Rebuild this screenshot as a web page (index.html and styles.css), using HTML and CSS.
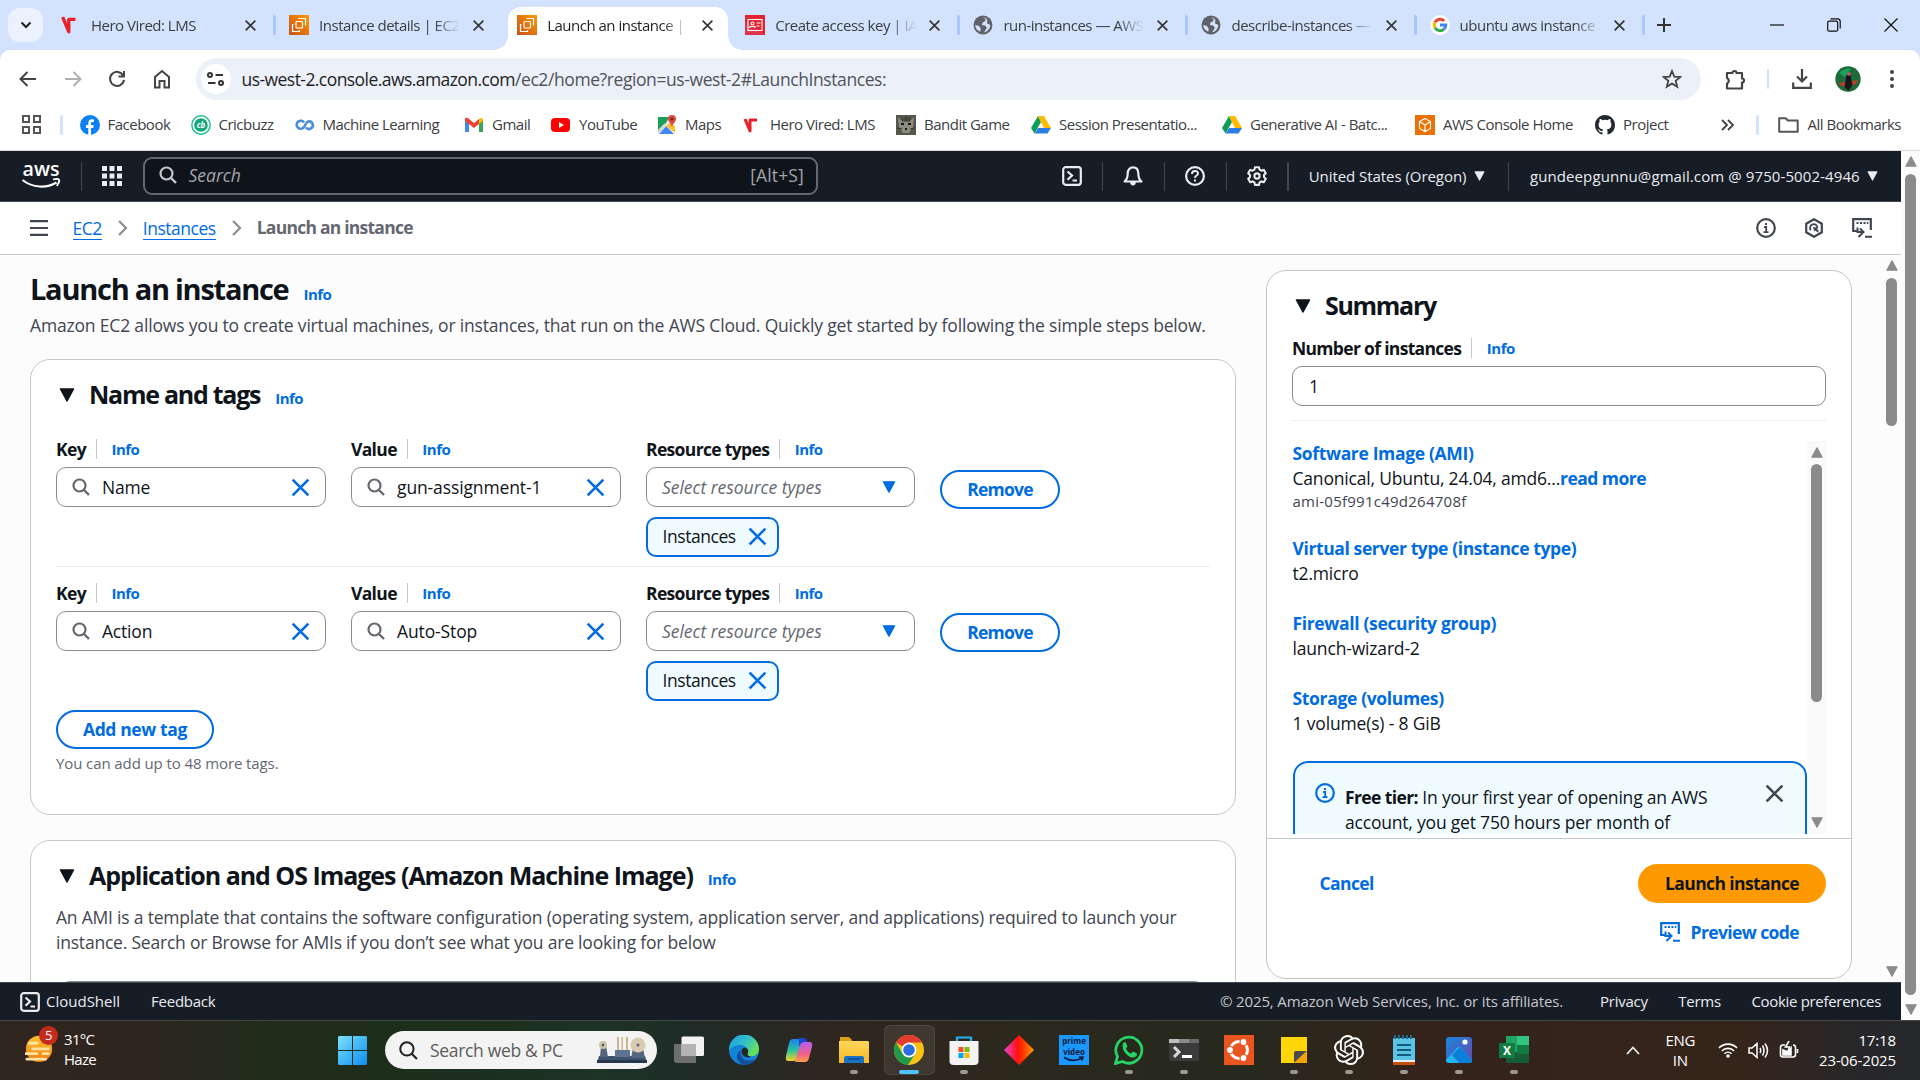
FILE: index.html
```html
<!DOCTYPE html>
<html lang="en">
<head>
<meta charset="utf-8">
<title>Launch an instance | EC2</title>
<link rel="stylesheet" href="styles.css">
</head>
<body>
<svg class="defs" aria-hidden="true">
  <defs>
    <linearGradient id="g-aws" x1="0" y1="1" x2="1" y2="0"><stop offset="0" stop-color="#c8511b"/><stop offset="1" stop-color="#ff9900"/></linearGradient>
    <linearGradient id="g-win" x1="0" y1="0" x2="1" y2="1"><stop offset="0" stop-color="#7ce0fd"/><stop offset="1" stop-color="#0a8fee"/></linearGradient>
    <linearGradient id="g-edge" x1="0" y1="0" x2="1" y2=".5"><stop offset="0" stop-color="#1c9ce0"/><stop offset=".6" stop-color="#35c1c8"/><stop offset="1" stop-color="#66e05a"/></linearGradient>
    <linearGradient id="g-cop" x1="0" y1="0" x2="0" y2="1"><stop offset="0" stop-color="#1b7ff0"/><stop offset=".5" stop-color="#27c2a0"/><stop offset="1" stop-color="#f4d02a"/></linearGradient>
    <linearGradient id="g-cop2" x1="0" y1="0" x2="0" y2="1"><stop offset="0" stop-color="#b45cf0"/><stop offset=".6" stop-color="#f2608a"/><stop offset="1" stop-color="#ffa04a"/></linearGradient>
    <linearGradient id="g-dia" x1="0" x2="1"><stop offset="0" stop-color="#e548d8"/><stop offset=".45" stop-color="#ff1010"/><stop offset=".6" stop-color="#ff2a00"/><stop offset="1" stop-color="#ffa000"/></linearGradient>
    <linearGradient id="g-fold" x1="0" y1="0" x2="0" y2="1"><stop offset="0" stop-color="#ffd75a"/><stop offset="1" stop-color="#f7b928"/></linearGradient>
    <linearGradient id="g-pho" x1="0" y1="0" x2="1" y2="1"><stop offset="0" stop-color="#1a84dc"/><stop offset="1" stop-color="#6a4bb0"/></linearGradient>
    <linearGradient id="g-sun" x1="0" y1="0" x2="0" y2="1"><stop offset="0" stop-color="#ffc52e"/><stop offset="1" stop-color="#f07a13"/></linearGradient>
  </defs>
  <symbol id="close" viewBox="0 0 16 16"><path d="M2 2l12 12M14 2L2 14" fill="none" stroke="currentColor" stroke-width="2"/></symbol>
  <symbol id="search" viewBox="0 0 18 18"><circle cx="7.5" cy="7.5" r="6" fill="none" stroke="currentColor" stroke-width="2.2"/><path d="M12 12l5 5" stroke="currentColor" stroke-width="2.4"/></symbol>
  <symbol id="down" viewBox="0 0 16 14"><path d="M1.5 1h13L8 13z" fill="currentColor" stroke="currentColor" stroke-width="1.5" stroke-linejoin="round"/></symbol>
  <symbol id="vired" viewBox="0 0 18 18"><path d="M1.500 2L7 15V4h6" fill="none" stroke="#e8202c" stroke-width="3" stroke-linejoin="round"/></symbol>
  <symbol id="ec2" viewBox="0 0 20 20"><path fill="url(#g-aws)" d="M0 0h20v20H0z"/><g fill="none" stroke="#fff" stroke-width="1.2"><rect x="7" y="6.500" width="6.500" height="6.500" rx="1"/><path d="M10 4V3.500h6.500V10H16M4.500 9.500H3.500V16.500H10.500V15"/></g></symbol>
  <symbol id="iam" viewBox="0 0 20 20"><path fill="#dd344c" d="M0 0h20v20H0z"/><path fill="#e2222c" d="M0 0h20v20L0 6z"/><g fill="none" stroke="#fff" stroke-width="1.1"><rect x="3" y="4.500" width="14" height="11"/><circle cx="7.500" cy="8.500" r="1.500"/><path d="M5 13v-1.500h5V13M11.500 8h4M11.500 11h3"/></g></symbol>
  <symbol id="globe" viewBox="0 0 18 18"><circle cx="9" cy="9" r="8.500" fill="#5f6368"/><path d="M9 2c2 1 3 2 2 3.500L8.500 7 8 9l3 .5 1.500 2-2.500 4c3-.5 5.500-3 5.500-6.500l-3-1.500.5-3C12 3 10.500 2 9 2zM2 9l3.500 1 1.500 2.500L6.500 15C4 14 2 12 2 9z" fill="#d3e2fd"/></symbol>
  <symbol id="google" viewBox="0 0 20 20"><circle cx="10" cy="10" r="10" fill="#fff"/><g fill="none" stroke-width="3"><path d="M14.200 6A5.800 5.800 0 0 0 5 7.200" stroke="#ea4335"/><path d="M5 7.200a5.800 5.800 0 0 0 0 5.600" stroke="#fbbc05"/><path d="M5 12.800a5.800 5.800 0 0 0 9 1.300" stroke="#34a853"/><path d="M10 10h5.800a5.800 5.800 0 0 1-1.800 4.100" stroke="#4285f4"/></g></symbol>
  <symbol id="drive" viewBox="0 0 20 18"><path fill="#0f9d58" d="M7 0L0 12l3.500 5.500L10 6z"/><path fill="#ffba00" d="M7 0h6l7 12h-7z"/><path fill="#2f7de1" d="M3.500 17.500L7 12h13l-3.500 5.500z"/></symbol>
  <symbol id="shell" viewBox="0 0 20 20"><rect x="1.200" y="1.200" width="17.600" height="17.600" rx="2.500" fill="none" stroke="currentColor" stroke-width="2.200"/><path d="M5.500 5.500l4.500 4-4.500 4.200M10.500 14.500H15" fill="none" stroke="currentColor" stroke-width="2.200"/></symbol>
  <symbol id="info" viewBox="0 0 20 20"><circle cx="10" cy="10" r="8.800" fill="none" stroke="currentColor" stroke-width="2.200"/><path d="M8 9h2.200v5M7.500 14.200h5M9 6h2" fill="none" stroke="currentColor" stroke-width="1.800"/></symbol>
  <symbol id="code" viewBox="0 0 20 20"><path d="M5.500 13H1.200V1.200h17.600V12" fill="none" stroke="currentColor" stroke-width="2.200"/><path d="M4.500 5h2M8 5h2M11.500 5h2M14.800 5h1.500M13 18.800h7M5.500 9.500v4.500h5.500M8 10.500l3.500 3.500-5 5" fill="none" stroke="currentColor" stroke-width="2"/></symbol>
</svg>

<div class="tabs">
  <div class="tab-menu"><svg width="12" height="8" viewBox="0 0 12 8"><path d="M1.500 1.500L6 6l4.500-4.500" fill="none" stroke="#1f1f1f" stroke-width="2"/></svg></div>
  <div class="tab"><svg class="fav"><use href="#vired"/></svg><span class="tt">Hero Vired: LMS</span><svg class="tx"><use href="#close"/></svg></div>
  <div class="tab before"><svg class="fav"><use href="#ec2"/></svg><span class="tt">Instance details | EC2 |</span><svg class="tx"><use href="#close"/></svg></div>
  <div class="tab on"><svg class="fav"><use href="#ec2"/></svg><span class="tt">Launch an instance | EC2</span><svg class="tx"><use href="#close"/></svg></div>
  <div class="tab"><svg class="fav"><use href="#iam"/></svg><span class="tt">Create access key | IAM</span><svg class="tx"><use href="#close"/></svg></div>
  <div class="tab"><svg class="fav"><use href="#globe"/></svg><span class="tt">run-instances — AWS C</span><svg class="tx"><use href="#close"/></svg></div>
  <div class="tab"><svg class="fav"><use href="#globe"/></svg><span class="tt">describe-instances — A</span><svg class="tx"><use href="#close"/></svg></div>
  <div class="tab"><svg class="fav"><use href="#google"/></svg><span class="tt">ubuntu aws instance a</span><svg class="tx"><use href="#close"/></svg></div>
  <svg class="plus" width="14" height="14" viewBox="0 0 14 14"><path d="M7 0v14M0 7h14" stroke="#333" stroke-width="2"/></svg>
  <div class="winbtns">
    <svg width="14" height="14" viewBox="0 0 14 14"><path d="M0 7h14" stroke="#111" stroke-width="1.200"/></svg>
    <svg width="14" height="14" viewBox="0 0 14 14" fill="none" stroke="#111" stroke-width="1.200"><rect x=".7" y="3.200" width="10" height="10" rx="1.500"/><path d="M3.500.8h7a2.700 2.700 0 0 1 2.700 2.700v7"/></svg>
    <svg width="14" height="14" viewBox="0 0 14 14"><path d="M.5.5l13 13M13.500.5l-13 13" stroke="#111" stroke-width="1.200"/></svg>
  </div>
</div>

<div class="strip"><div class="toolbar">
  <div class="nav">
    <svg width="18" height="16" viewBox="0 0 18 16"><path d="M8.500 1L1.500 8l7 7M1.500 8H17" fill="none" stroke="#444" stroke-width="2"/></svg>
    <svg width="18" height="16" viewBox="0 0 18 16"><path d="M9.500 1l7 7-7 7M16.500 8H1" fill="none" stroke="#b0b0b0" stroke-width="2"/></svg>
    <svg width="18" height="18" viewBox="0 0 18 18"><path d="M15.200 5.500A7 7 0 1 0 16 9.800M16 1v5.500h-5.500" fill="none" stroke="#444" stroke-width="2"/></svg>
    <svg width="18" height="20" viewBox="0 0 18 20"><path d="M2 18.500V8l7-6 7 6v10.500h-4.500V12h-5v6.500z" fill="none" stroke="#444" stroke-width="2"/></svg>
  </div>
  <div class="omni">
    <div class="site"><svg width="17" height="14" viewBox="0 0 17 14"><g fill="none" stroke="#333" stroke-width="2"><circle cx="3" cy="3" r="2"/><path d="M8.500 3H16M1 11h7.500"/><circle cx="14" cy="11" r="2"/></g></svg></div>
    <div class="url"><span class="host">us-west-2.console.aws.amazon.com</span><span class="path">/ec2/home?region=us-west-2#LaunchInstances:</span></div>
    <svg class="star" width="20" height="20" viewBox="0 0 20 20"><path d="M10 2l2.300 5.600 6 .4-4.600 3.900 1.500 5.900L10 14.500l-5.200 3.300 1.500-5.900L1.700 8l6-.4z" fill="none" stroke="#444" stroke-width="1.800"/></svg>
  </div>
  <div class="tools">
    <svg width="21" height="21" viewBox="0 0 21 21"><path d="M2 4h5.500a2 2 0 0 1 4 0H17v5.500a2 2 0 0 1 0 4V19.500H2V14.500a3 3 0 0 0 0-5.500z" fill="none" stroke="#444" stroke-width="2.200" stroke-linejoin="round"/></svg>
    <i class="bar"></i>
    <svg width="20" height="20" viewBox="0 0 20 20"><path d="M10 0v12M5 7.500l5 5 5-5M1.200 13.500v5.300h17.600v-5.300" fill="none" stroke="#444" stroke-width="2.200"/></svg>
    <svg width="26" height="26" viewBox="0 0 26 26"><circle cx="13" cy="13" r="12.700" fill="#1d6b38"/><path d="M3 17l20-3a12 12 0 0 1-20 3" fill="#b8412c"/><path d="M4 7q6-6 12-4l-6 8z" fill="#19a05c"/><path d="M11.500 9h4l2 10-4 6-4-4z" fill="#14171f"/><circle cx="14" cy="8" r="1.800" fill="#d94a6b"/></svg>
    <svg width="4" height="18" viewBox="0 0 4 18" fill="#444"><circle cx="2" cy="2" r="2"/><circle cx="2" cy="9" r="2"/><circle cx="2" cy="16" r="2"/></svg>
  </div>
</div></div>

<div class="marks">
  <svg class="apps" width="19" height="19" viewBox="0 0 19 19" fill="none" stroke="#555" stroke-width="2"><path d="M1 1h6v6H1zM12 1h6v6h-6zM1 12h6v6H1zM12 12h6v6h-6z"/></svg>
  <i class="bar"></i>
  <div class="mlist">
    <span><svg viewBox="0 0 20 20"><circle cx="10" cy="10" r="10" fill="#0c80f5"/><path d="M8.300 20v-7H6v-3h2.300V8c0-2.500 1.400-3.800 3.600-3.800.9 0 1.600.1 1.900.2v2.500h-1.300c-1.200 0-1.500.6-1.500 1.400V10h2.700l-.5 3H11v7z" fill="#fff"/></svg>Facebook</span>
    <span><svg viewBox="0 0 20 20"><circle cx="10" cy="10" r="9.200" fill="#fff" stroke="#1abc8a" stroke-width="1.400"/><circle cx="10" cy="10" r="6.800" fill="#12a87b"/><text x="10" y="13" text-anchor="middle" font-size="8" font-weight="700" font-style="italic" fill="#fff">cb</text></svg>Cricbuzz</span>
    <span><svg viewBox="0 0 20 20"><path d="M9 7.500A4 4 0 1 0 8 13c2.500-1 2-5.500 5-6.500a3.800 3.800 0 1 1-2 6" fill="none" stroke="#4a8fd4" stroke-width="2.600"/></svg>Machine Learning</span>
    <span><svg viewBox="0 0 20 20"><path fill="#4285f4" d="M1 5v12h4V8z"/><path fill="#34a853" d="M15 8v9h4V5z"/><path fill="#ea4335" d="M1 4c1-2 3-1 4 0l5 4 5-4v5l-5 4-9-7z"/><path fill="#fbbc04" d="M15 4c2-2 4-1 4 1v1l-4 3z"/></svg>Gmail</span>
    <span><svg viewBox="0 0 20 20"><rect x="0" y="3" width="19" height="14" rx="4" fill="#f00"/><path d="M8 7l5 3-5 3z" fill="#fff"/></svg>YouTube</span>
    <span><svg viewBox="0 0 20 20"><path fill="#1e9e54" d="M1 2h11l-4 9-7 6z"/><path fill="#4285f4" d="M2 19l7-8 8 8z"/><path fill="#fbc02d" d="M9 11l3-3 6 3v7z"/><path fill="#d8d8d8" d="M1 15l7-7 2 2-8 9z"/><path fill="#dd4b3e" d="M15 0a4 4 0 0 1 4 4c0 3-3 4-4 8-1-4-4-5-4-8a4 4 0 0 1 4-4z"/><circle cx="15" cy="4" r="1.500" fill="#7a1f16"/></svg>Maps</span>
    <span><svg viewBox="0 0 20 20"><path d="M3 4l5 12V5h7" fill="none" stroke="#e8202c" stroke-width="3" stroke-linejoin="round"/></svg>Hero Vired: LMS</span>
    <span><svg viewBox="0 0 20 20"><path fill="#55564c" d="M0 0h20v20H0z"/><path d="M2 2l4 4h8l4-4-1 10-4 6H7l-4-6z" fill="#8c8b80"/><path d="M9 2v5M11 2v5M6 3l1 4M14 3l-1 4M1 13l5 1M19 13l-5 1" stroke="#33342d"/><path d="M5 9h3M12 9h3M9 14h2" stroke="#15160f" stroke-width="2"/></svg>Bandit Game</span>
    <span><svg viewBox="0 0 20 20"><use href="#drive"/></svg>Session Presentatio...</span>
    <span><svg viewBox="0 0 20 20"><use href="#drive"/></svg>Generative AI - Batc...</span>
    <span><svg viewBox="0 0 20 20"><path fill="#ed7100" d="M0 0h20v20H0z"/><path d="M10 3.500l5.500 3v7l-5.500 3-5.500-3v-7zM4.500 6.500L10 10l5.500-3.500M10 10v6.500" fill="none" stroke="#fff" stroke-width="1.100"/></svg>AWS Console Home</span>
    <span><svg viewBox="0 0 16 16"><path fill="#24292f" d="M8 0C3.580 0 0 3.580 0 8c0 3.540 2.290 6.530 5.470 7.590.4.070.55-.17.55-.38 0-.19-.01-.82-.01-1.490-2.010.37-2.530-.49-2.690-.94-.09-.23-.48-.94-.82-1.130-.28-.15-.68-.52-.01-.53.63-.01 1.080.58 1.230.82.72 1.210 1.870.87 2.330.66.07-.52.28-.87.51-1.070-1.780-.2-3.640-.89-3.640-3.950 0-.87.31-1.590.82-2.150-.08-.2-.36-1.020.08-2.120 0 0 .67-.21 2.200.82a7.600 7.600 0 0 1 4 0c1.530-1.040 2.200-.82 2.200-.82.44 1.100.16 1.920.08 2.120.51.56.82 1.270.82 2.150 0 3.070-1.870 3.750-3.650 3.950.29.25.54.73.54 1.480 0 1.070-.01 1.930-.01 2.200 0 .21.15.46.55.38A8 8 0 0 0 16 8c0-4.420-3.580-8-8-8z"/></svg>Project</span>
  </div>
  <svg class="more" width="13" height="12" viewBox="0 0 13 12"><path d="M1 1l5 5-5 5M7 1l5 5-5 5" fill="none" stroke="#444" stroke-width="1.800"/></svg>
  <i class="bar"></i>
  <svg class="folder" width="21" height="16" viewBox="0 0 21 16"><path d="M1.200 1.200h6.500l2 2.300h10v11.300H1.200z" fill="none" stroke="#555" stroke-width="2" stroke-linejoin="round"/></svg>
  <span>All Bookmarks</span>
</div>

<div class="page">
  <div class="site-col">
    <header class="aws">
      <svg class="logo" width="40" height="26" viewBox="0 0 40 26"><text x="20" y="13" text-anchor="middle" font-size="19.500" font-weight="600" fill="#fff" textLength="37" lengthAdjust="spacingAndGlyphs">aws</text><path d="M1.500 17c10 8 24 8.500 34 2.500" fill="none" stroke="#fff" stroke-width="2.200"/><path d="M32 16.500c3-.8 5.500-.6 6 .2s-.5 4-2.200 6.300" fill="none" stroke="#fff" stroke-width="1.800"/></svg>
      <i class="hsep"></i>
      <svg class="grid9" width="20" height="20" viewBox="0 0 20 20" fill="#ebebf0"><path d="M0 0h5v5H0zM7.500 0h5v5h-5zM15 0h5v5h-5zM0 7.500h5v5H0zM7.500 7.500h5v5h-5zM15 7.500h5v5h-5zM0 15h5v5H0zM7.500 15h5v5h-5zM15 15h5v5h-5z"/></svg>
      <div class="hsearch"><svg width="18" height="18"><use href="#search"/></svg><em>Search</em><span>[Alt+S]</span></div>
      <div class="hicons">
        <svg width="20" height="20"><use href="#shell"/></svg><i class="hsep"></i>
        <svg width="20" height="20" viewBox="0 0 20 20"><path d="M1.500 15.500c2.500-2 3.200-4 3.200-8C4.700 3.500 7 1.300 10 1.300s5.300 2.200 5.300 6.200c0 4 .7 6 3.200 8z" fill="none" stroke="currentColor" stroke-width="2.200" stroke-linejoin="round"/><path d="M7.200 16a2.800 3.500 0 0 0 5.600 0z" fill="currentColor"/></svg><i class="hsep"></i>
        <svg width="20" height="20" viewBox="0 0 20 20"><circle cx="10" cy="10" r="8.900" fill="none" stroke="currentColor" stroke-width="2.200"/><path d="M7 8c0-4 6-4 6-.6 0 2.300-3 2-3 4.600" fill="none" stroke="currentColor" stroke-width="2"/><path d="M9 13.500h2v2H9z" fill="currentColor"/></svg><i class="hsep"></i>
        <svg width="20" height="20" viewBox="0 0 20 20" fill="none" stroke="currentColor" stroke-width="2.100" stroke-linejoin="round"><path d="M8 1.200h4l.6 2.500 1.700 1 2.500-.8 2 3.400-1.800 1.800v1.900l1.800 1.800-2 3.400-2.500-.8-1.700 1-.6 2.500H8l-.6-2.500-1.700-1-2.500.8-2-3.400L3 11V9.100L1.200 7.300l2-3.400 2.500.8 1.700-1z"/><circle cx="10" cy="10" r="2.600"/></svg><i class="hsep"></i>
      </div>
      <div class="region">United States (Oregon)<svg><use href="#down"/></svg></div>
      <i class="hsep"></i>
      <div class="acct">gundeepgunnu@gmail.com @ 9750-5002-4946<svg><use href="#down"/></svg></div>
    </header>

    <nav class="crumbs">
      <svg class="burger" width="18" height="16" viewBox="0 0 18 16"><path d="M0 1.200h18M0 8h18M0 14.800h18" stroke="#424650" stroke-width="2.200"/></svg>
      <a>EC2</a><svg class="gt" viewBox="0 0 10 16"><path d="M1 1l7 7-7 7" fill="none" stroke="#8c8c94" stroke-width="2.200"/></svg>
      <a>Instances</a><svg class="gt" viewBox="0 0 10 16"><path d="M1 1l7 7-7 7" fill="none" stroke="#8c8c94" stroke-width="2.200"/></svg>
      <b>Launch an instance</b>
      <div class="cicons">
        <svg width="20" height="20"><use href="#info"/></svg>
        <svg width="20" height="20" viewBox="0 0 20 20"><path d="M10 1.200l7.800 4.500v8.600L10 18.800l-7.800-4.500V5.700z" fill="none" stroke="currentColor" stroke-width="2.200"/><path d="M6.800 12.200a3.700 3.700 0 1 1 6.600-2" fill="none" stroke="currentColor" stroke-width="1.800"/><path d="M9 9l5 .8-1 1.200 2 2-1.500 1.500-2-2-1.200 1z" fill="currentColor"/></svg>
        <svg width="20" height="20"><use href="#code"/></svg>
      </div>
    </nav>

    <div class="main">
      <div class="form">
        <h1>Launch an instance <a class="info">Info</a></h1>
        <p class="desc">Amazon EC2 allows you to create virtual machines, or instances, that run on the AWS Cloud. Quickly get started by following the simple steps below.</p>

        <section class="card tags">
          <h2><svg><use href="#down"/></svg>Name and tags <a class="info">Info</a></h2>
          <div class="row">
            <div><label>Key<i></i><a class="info">Info</a></label><div class="input"><svg class="mag"><use href="#search"/></svg>Name<svg class="x"><use href="#close"/></svg></div></div>
            <div><label>Value<i></i><a class="info">Info</a></label><div class="input"><svg class="mag"><use href="#search"/></svg>gun-assignment-1<svg class="x"><use href="#close"/></svg></div></div>
            <div><label>Resource types<i></i><a class="info">Info</a></label><div class="input"><em>Select resource types</em><svg class="tri"><use href="#down"/></svg></div>
              <div class="token">Instances<svg class="x"><use href="#close"/></svg></div></div>
            <div class="btn">Remove</div>
          </div>
          <div class="row second">
            <div><label>Key<i></i><a class="info">Info</a></label><div class="input"><svg class="mag"><use href="#search"/></svg>Action<svg class="x"><use href="#close"/></svg></div></div>
            <div><label>Value<i></i><a class="info">Info</a></label><div class="input"><svg class="mag"><use href="#search"/></svg>Auto-Stop<svg class="x"><use href="#close"/></svg></div></div>
            <div><label>Resource types<i></i><a class="info">Info</a></label><div class="input"><em>Select resource types</em><svg class="tri"><use href="#down"/></svg></div>
              <div class="token">Instances<svg class="x"><use href="#close"/></svg></div></div>
            <div class="btn">Remove</div>
          </div>
          <div class="btn add">Add new tag</div>
          <p class="note">You can add up to 48 more tags.</p>
        </section>

        <section class="card ami">
          <h2><svg><use href="#down"/></svg>Application and OS Images (Amazon Machine Image) <a class="info">Info</a></h2>
          <p class="amitext">An AMI is a template that contains the software configuration (operating system, application server, and applications) required to launch your instance. Search or Browse for AMIs if you don’t see what you are looking for below</p>
          <div class="amibox"></div>
        </section>
      </div>

      <aside class="card summary">
        <h2><svg><use href="#down"/></svg>Summary</h2>
        <label>Number of instances<i></i><a class="info">Info</a></label>
        <div class="input num">1</div>
        <hr>
        <div class="details">
          <dl>
            <dt>Software Image (AMI)</dt><dd>Canonical, Ubuntu, 24.04, amd6...<b>read more</b></dd><dd class="small">ami-05f991c49d264708f</dd>
            <dt>Virtual server type (instance type)</dt><dd>t2.micro</dd>
            <dt>Firewall (security group)</dt><dd>launch-wizard-2</dd>
            <dt>Storage (volumes)</dt><dd>1 volume(s) - 8 GiB</dd>
            <div class="alert"><svg class="ic"><use href="#info"/></svg><p><b>Free tier:</b> In your first year of opening an AWS<br>account, you get 750 hours per month of</p><svg class="x"><use href="#close"/></svg></div>
          </dl>
          <div class="scroll inner"><svg class="up"><use href="#down"/></svg><i></i><svg><use href="#down"/></svg></div>
        </div>
        <footer>
          <div class="actions"><a>Cancel</a><div class="launch">Launch instance</div></div>
          <div class="preview"><svg width="20" height="20"><use href="#code"/></svg>Preview code</div>
        </footer>
      </aside>
      <div class="scroll mid"><svg class="up"><use href="#down"/></svg><i></i><svg><use href="#down"/></svg></div>
    </div>

    <footer class="foot">
      <svg width="20" height="20"><use href="#shell"/></svg><span class="cs">CloudShell</span><span>Feedback</span>
      <span class="copy">© 2025, Amazon Web Services, Inc. or its affiliates.</span><span class="pr">Privacy</span><span class="te">Terms</span><span class="ck">Cookie preferences</span>
    </footer>
  </div>
  <div class="scroll outer"><svg class="up"><use href="#down"/></svg><i></i><svg><use href="#down"/></svg></div>
</div>

<div class="taskbar">
  <div class="weather">
    <svg width="32" height="36" viewBox="0 0 32 36"><circle cx="15" cy="20" r="14" fill="url(#g-sun)"/><path d="M5 14h8M8 20h17M1 25h12M19 25h6M2 31h20" stroke="#ffe2a0" stroke-width="3" stroke-linecap="round"/></svg>
    <b class="badge">5</b>
    <span>31°C<br>Haze</span>
  </div>
  <svg class="win" width="29" height="29" viewBox="0 0 29 29"><path d="M1 0h13v14H0V1zM15 0h13l1 1v13H15zM0 15h14v14H1l-1-1zM15 15h14v13l-1 1H15z" fill="url(#g-win)"/></svg>
  <div class="tsearch"><svg width="19" height="19" viewBox="0 0 18 18"><circle cx="7.500" cy="7.500" r="6.300" fill="none" stroke="#222" stroke-width="1.900"/><path d="M12 12l5 5" stroke="#222" stroke-width="2"/></svg><span>Search web &amp; PC</span>
    <svg width="50" height="28" viewBox="0 0 50 28"><path d="M2 20h46l2 7H0z" fill="#3f536d"/><path d="M0 24h50v3H0z" fill="#26364c"/><path d="M4 10h5l2 11H3zM36 12h10l2 10H34z" fill="#53657f"/><path d="M18 14h15v7H18z" fill="#5d7391"/><path d="M20 1h2v13h-2zM24.500 1h1.500v13h-1.500zM29 1h2v13h-2z" fill="#c9b78f"/><circle cx="41" cy="9" r="7.500" fill="#d8cbb0"/><circle cx="41" cy="9" r="1.500" fill="#7a5a8c"/><circle cx="6" cy="9" r="4" fill="#ccc1a6"/><circle cx="6" cy="9" r="1.200" fill="#3d4b60"/></svg></div>
  <div class="dock">
    <div><svg viewBox="0 0 30 30"><path d="M0 9h22v19H2l-2-2z" fill="#6f6f6f"/><rect x="7.500" y="1.500" width="22.500" height="19.500" rx="1.500" fill="#f2f2f2"/><path d="M7.500 9H22v12H7.500z" fill="#b4b4b4"/></svg></div>
    <div><svg viewBox="0 0 30 30"><circle cx="15" cy="15" r="15" fill="#1283d8"/><path d="M0 15A15 15 0 0 1 30 14c0 6-5 8-11 7-2-1 1-3 0-6C17 9 6 8 0 15z" fill="url(#g-edge)"/><path d="M12 15c-2 8 4 13 15 9a15 15 0 0 1-12 6C6 27 6 18 12 15z" fill="#12509c"/><path d="M13 14c3-3 7 0 6 3s0 4 3 5c-6 2-11-3-9-8z" fill="#222a20"/></svg></div>
    <div><svg viewBox="0 0 30 30"><path d="M9 4h10l-5 18q-1 4-5 4H4q-3 0-2-5L5 8q1-4 4-4z" fill="url(#g-cop)"/><path d="M15 3h5q3 0 3 4l-3 4h-5z" fill="#1b48c8"/><path d="M21 27H11l5-17q1-3 5-3h5q3 0 2 5l-3 11q-1 4-4 4z" fill="url(#g-cop2)"/></svg></div>
    <div class="run"><svg viewBox="0 0 30 30"><path d="M1 2h9l3 3v5H1z" fill="#d99e13"/><path d="M0 6h29l1 1v21H0z" fill="url(#g-fold)"/><path d="M5 28v-5q0-2 2-2h16q2 0 2 2v5z" fill="#1a72c4"/><path d="M9 24h12" stroke="#0d4a8a" stroke-width="1.500"/></svg></div>
    <div class="run active"><svg viewBox="0 0 30 30"><circle cx="15" cy="15" r="15" fill="#fbc116"/><path d="M15 15L2 7.500A15 15 0 0 1 28 7.500H15z" fill="#e33b2e"/><path d="M2 7.500A15 15 0 0 0 14 30l7.500-11.500L15 15 8.500 18.500z" fill="#219a4a"/><circle cx="15" cy="15" r="7.400" fill="#fff"/><circle cx="15" cy="15" r="5.800" fill="#2a6fe0"/></svg></div>
    <div class="run"><svg viewBox="0 0 30 30"><path d="M8 8V2.500h14V8" fill="none" stroke="#29b0ec" stroke-width="2.200"/><path d="M.5 6h29v20q0 4-4 4H4.500q-4 0-4-4z" fill="#f3f3f3"/><path d="M9.500 12h5v5h-5z" fill="#f25022"/><path d="M15.500 12h5v5h-5z" fill="#7fba00"/><path d="M9.500 18h5v5h-5z" fill="#00a4ef"/><path d="M15.500 18h5v5h-5z" fill="#ffb900"/></svg></div>
    <div><svg viewBox="0 0 30 30"><path d="M15 0l15 15-15 15L0 15z" fill="url(#g-dia)"/></svg></div>
    <div><svg viewBox="0 0 30 30"><path d="M0 0h30v30H0z" fill="#1a98ff"/><g font-size="8" font-weight="700" fill="#0b1b38" text-anchor="middle"><text x="15" y="9">prime</text><text x="15" y="20">video</text></g><path d="M5 22.500q9 5.500 18 .5M20 22l4 .2-1.500 3.300" fill="none" stroke="#0b1b38" stroke-width="1.700"/></svg></div>
    <div class="run"><svg viewBox="0 0 30 30"><path d="M1.500 28.500l2-7A13 13 0 1 1 8.500 26.500z" fill="none" stroke="#25d366" stroke-width="2.800"/><path d="M9 8l2.500-1 2 4.500-1.500 2c1 2.500 2.500 4 5 5l2-2 4 2c.5 3-3 4.500-5 4C13 21.500 7 15 9 8z" fill="#25d366"/></svg></div>
    <div class="run"><svg viewBox="0 0 30 30"><path d="M0 4h30v20q0 2-2 2H2q-2 0-2-2z" fill="#3b3b3b"/><path d="M0 4h10v4H0z" fill="#bdbdbd"/><path d="M10 4h10v4H10z" fill="#8b8b8b"/><path d="M20 4h10v4H20z" fill="#6a6a6a"/><path d="M5 12l5 5-5 5" fill="none" stroke="#d8d8d8" stroke-width="3"/><path d="M13 21.500h10" stroke="#fff" stroke-width="3"/></svg></div>
    <div><svg viewBox="0 0 30 30"><path d="M0 0h30v30H0z" fill="#e95420"/><circle cx="15" cy="15" r="8.500" fill="none" stroke="#fff" stroke-width="3"/><g fill="#fff" stroke="#e95420" stroke-width="1.200"><circle cx="6" cy="15" r="3.500"/><circle cx="19.500" cy="7" r="3.500"/><circle cx="19.500" cy="23" r="3.500"/></g></svg></div>
    <div class="run"><svg viewBox="0 0 30 30"><path d="M2 2h26v15L17 28H2z" fill="#ffd60a"/><path d="M15 28V18q0-2 2-2h11z" fill="#4c4c4c"/><path d="M15 28l13-12v12z" fill="#f7a400"/></svg></div>
    <div class="run"><svg viewBox="0 0 24 24"><path fill="#fff" d="M22.282 9.821a5.985 5.985 0 0 0-.516-4.910 6.046 6.046 0 0 0-6.510-2.900A6.065 6.065 0 0 0 4.981 4.182a5.985 5.985 0 0 0-3.998 2.900 6.046 6.046 0 0 0 .743 7.097 5.980 5.980 0 0 0 .510 4.911 6.051 6.051 0 0 0 6.515 2.900A5.985 5.985 0 0 0 13.260 24a6.056 6.056 0 0 0 5.772-4.206 5.990 5.990 0 0 0 3.998-2.900 6.056 6.056 0 0 0-.747-7.073zM13.260 22.430a4.476 4.476 0 0 1-2.876-1.040l.141-.081 4.779-2.758a.795.795 0 0 0 .393-.681v-6.737l2.020 1.169a.071.071 0 0 1 .038.052v5.583a4.504 4.504 0 0 1-4.495 4.493zM3.600 18.304a4.470 4.470 0 0 1-.535-3.014l.142.085 4.783 2.758a.771.771 0 0 0 .780 0l5.843-3.368v2.332a.080.080 0 0 1-.033.062L9.740 19.950a4.500 4.500 0 0 1-6.140-1.646zM2.340 7.896a4.485 4.485 0 0 1 2.366-1.973V11.600a.766.766 0 0 0 .388.677l5.815 3.355-2.020 1.168a.076.076 0 0 1-.071 0l-4.830-2.786A4.504 4.504 0 0 1 2.340 7.872zm16.597 3.855l-5.833-3.387L15.119 7.200a.076.076 0 0 1 .071 0l4.830 2.791a4.494 4.494 0 0 1-.676 8.105v-5.678a.790.790 0 0 0-.407-.667zm2.010-3.023l-.141-.085-4.774-2.782a.776.776 0 0 0-.785 0L9.409 9.230V6.897a.066.066 0 0 1 .028-.061l4.830-2.787a4.500 4.500 0 0 1 6.680 4.660zm-12.640 4.135l-2.020-1.164a.080.080 0 0 1-.038-.057V6.075a4.500 4.500 0 0 1 7.375-3.453l-.142.080L8.704 5.460a.795.795 0 0 0-.393.681zm1.097-2.365l2.602-1.500 2.607 1.500v2.999l-2.597 1.500-2.607-1.500z"/></svg></div>
    <div class="run"><svg viewBox="0 0 30 30"><path d="M4 3h22v25H4z" fill="#59c4e6"/><path d="M4 27h22v3H4z" fill="#c4520f"/><path d="M4 25h22v2H4z" fill="#eef"/><path d="M8 10h14M8 15h14M8 20h14" stroke="#145a7d" stroke-width="2"/><path d="M6 0v4M10 0v4M14 0v4M18 0v4M22 0v4" stroke="#1b6c93" stroke-width="2"/></svg></div>
    <div class="run"><svg viewBox="0 0 30 30"><rect x="2" y="2" width="26" height="26" rx="3" fill="url(#g-pho)"/><circle cx="21" cy="7" r="2.600" fill="#fff"/><path d="M2 25L13 13q2-2 4 0l11 12q0 3-3 3H5q-3 0-3-3z" fill="#22b7f2"/><path d="M16 12l12 13q0 3-3 3H15L8 20z" fill="#0c7fd8"/></svg></div>
    <div class="run"><svg viewBox="0 0 30 30"><path d="M7 1h11v27H7z" fill="#21a366"/><path d="M18 1h12v9H18z" fill="#33c481"/><path d="M18 10h12v9H18z" fill="#107c41"/><path d="M7 17h11v11H7zM18 19h12v9H18z" fill="#185c37"/><rect x="0" y="8" width="16" height="15" rx="1" fill="#107c41"/><text x="8" y="20" font-size="12" font-weight="700" fill="#fff" text-anchor="middle">X</text></svg></div>
  </div>
  <div class="tray">
    <svg class="chev" width="14" height="9" viewBox="0 0 14 9"><path d="M1 8l6-6.500L13 8" fill="none" stroke="#eee" stroke-width="1.800"/></svg>
    <span class="lang">ENG<br>IN</span>
    <svg width="20" height="16" viewBox="0 0 20 16" fill="none" stroke="#fff" stroke-width="1.600"><path d="M1 6a12.500 12.500 0 0 1 18 0M3.800 9a8.700 8.700 0 0 1 12.400 0M6.500 11.700a5 5 0 0 1 7 0"/><circle cx="10" cy="14" r="1" fill="#fff"/></svg>
    <svg width="21" height="17" viewBox="0 0 21 17" fill="none" stroke="#fff" stroke-width="1.500"><path d="M1 6v5h3l5 4.500v-14L4 6zM12 6q1.500 2.500 0 5M14.500 3.500q3 5 0 10M17 1.500q5 7 0 14"/></svg>
    <svg width="20" height="18" viewBox="0 0 20 18" fill="none" stroke="#fff" stroke-width="1.600"><path d="M6 4H4Q1.500 4 1.500 6.500v7Q1.500 16 4 16h10q2.500 0 2.500-2.500v-7Q16.500 4 14 4M18.500 8v4"/><path d="M4 14V9l5 2 3-4v7z" fill="#fff"/><path d="M10 0L6.500 6h4L9 10" fill="none"/></svg>
    <span class="clock">17:18<br>23-06-2025</span>
  </div>
</div>
</body>
</html>
```
FILE: styles.css
```css
* { box-sizing: border-box; }
body {
  margin: 0; width: 1920px; height: 1080px; overflow: hidden;
  display: flex; flex-direction: column;
  font: 400 17.5px/25px "Open Sans", "Noto Sans", sans-serif;
  letter-spacing: -.17px; color: #0f141a; background: #fff;
}
svg { display: block; flex: none; }
svg text { letter-spacing: 0; }
.defs { position: absolute; width: 0; height: 0; }
h1, h2, p, dl, dd, dt { margin: 0; font-weight: 400; }
b { font-weight: 700; }

/* browser tabs */
.tabs { height: 50px; flex: none; display: flex; align-items: center; background: #d3e2fd; padding-left: 8px; font-size: 15px; letter-spacing: -.5px; color: #3c4043; }
.tab-menu { width: 35px; height: 34px; border-radius: 12px; background: #ebf1fd; display: flex; align-items: center; justify-content: center; margin-right: 9px; }
.tab { width: 228.1px; height: 43px; margin-top: 7px; padding: 0 23px 7px 9px; display: flex; align-items: center; position: relative; flex: none; }
.tab::after { content: ""; position: absolute; right: 4px; top: 8px; width: 3px; height: 20px; background: #a8c7fa; border-radius: 2px; }
.tab.on::after, .tab.before::after { display: none; }
.tab.on { background: #fff; border-radius: 13px 13px 0 0; color: #1f1f1f; width: 220px; margin-right: 8.100px; padding-right: 14px; }
.tab.on::before { content: ""; position: absolute; left: -14px; right: -14px; bottom: 0; height: 14px; background: radial-gradient(circle at 0 0, transparent 13.500px, #fff 14px) left / 14px 14px no-repeat, radial-gradient(circle at 100% 0, transparent 13.500px, #fff 14px) right / 14px 14px no-repeat; }
.fav { width: 20px; height: 20px; margin-right: 10px; }
.tt { width: 141px; overflow: hidden; white-space: nowrap; -webkit-mask-image: linear-gradient(90deg, #000 82%, transparent); mask-image: linear-gradient(90deg, #000 82%, transparent); }
.tx { width: 13px; height: 13px; margin-left: auto; color: #333; }
.plus { margin-left: 8px; }
.winbtns { display: flex; gap: 43px; margin-left: auto; margin-right: 22px; }

/* toolbar */
.strip { background: #d3e2fd; flex: none; }
.toolbar { height: 50px; background: #fff; border-radius: 10px 10px 0 0; display: flex; align-items: center; padding: 8px 26px 0 19px; }
.nav { display: flex; align-items: center; gap: 26.7px; margin-right: 24.5px; }
.omni { width: 1507px; height: 42px; border-radius: 21px; background: #ecf0f9; display: flex; align-items: center; padding: 0 19px 0 5px; }
.site { width: 30px; height: 30px; border-radius: 15px; background: #fff; display: flex; align-items: center; justify-content: center; margin-right: 11px; }
.url { letter-spacing: -.56px; padding-top: 1px; }
.host { color: #1f1f1f; }
.path { color: #50545a; letter-spacing: -.41px; }
.star { margin-left: auto; }
.tools { display: flex; align-items: center; margin-left: 24.5px; }
.bar { width: 3px; height: 20px; background: #d3e2fd; border-radius: 2px; flex: none; }
.tools .bar { margin: 0 23px 0 21px; width: 2px; }
.tools svg:nth-of-type(3) { margin: 0 29px 0 23px; }

/* bookmarks */
.marks { height: 51px; flex: none; display: flex; align-items: center; padding: 0 0 1px 22px; border-bottom: 1px solid #dadce0; font-size: 15px; letter-spacing: -.5px; color: #3c4043; }
.marks > .apps { margin-right: 19px; }
.mlist { margin-left: 16.5px; display: grid; grid-template-columns: 111px 104px 169.5px 87px 106px 85px 154px 135px 191px 193px 180px 125.5px; }
.mlist span { display: flex; align-items: center; white-space: nowrap; }
.mlist svg { width: 20px; height: 20px; margin-right: 8px; }
.more { margin-right: 22px; }
.folder { margin: 0 9px 0 19px; }

/* console */
.page { flex: 1; display: flex; min-height: 0; }
.site-col { width: 1901px; display: flex; flex-direction: column; }
.aws { height: 51px; flex: none; background: #161d26; border-bottom: 1px solid #424650; display: flex; align-items: center; padding-left: 20.5px; color: #ebebf0; font-size: 15px; font-weight: 500; letter-spacing: -.05px; }
.hsep { width: 1.500px; height: 29px; background: #424650; flex: none; }
.logo { margin-right: 20px; }
.grid9 { margin: 0 21px 0 19.5px; }
.hsearch { width: 675px; height: 38px; border: 2px solid #656871; border-radius: 9px; background: #0f141a; display: flex; align-items: center; padding: 0 11.500px 2px 14px; font-size: 17.5px; font-weight: 400; color: #a4a4ad; letter-spacing: 0; }
.hsearch svg { margin-right: 12px; color: #c6c6cd; }
.hsearch span { margin-left: auto; letter-spacing: .15px; }
.hicons { display: flex; align-items: center; gap: 20.5px; margin: 0 20px 0 244px; }
.hicons .hsep { margin: 0 -.3px; }
.region, .acct { display: flex; align-items: center; white-space: nowrap; }
.region svg, .acct svg { width: 11px; height: 10px; margin-left: 7.5px; }
.region { margin-right: 23px; }
.acct { margin-left: 20.5px; letter-spacing: .1px; }

.crumbs { height: 53px; flex: none; border-bottom: 1px solid #c6c6cd; display: flex; align-items: center; padding: 0 29px 1px 30px; }
.burger { margin-right: 24.5px; }
.crumbs a { color: #006ce0; line-height: 21px; border-bottom: 1px solid #006ce0; letter-spacing: -.48px; margin-top: 2px; }
.crumbs b { color: #656871; letter-spacing: -.76px; }
.gt { width: 10px; height: 16px; margin: 0 15px 0 16px; }
.cicons { display: flex; gap: 28px; margin-left: auto; color: #424650; }

.main { flex: 1; min-height: 0; background: #fcfcfd; display: flex; overflow: hidden; }
.form { width: 1206px; margin-left: 30px; flex: none; }
h1 { font-size: 29px; line-height: 36px; font-weight: 700; letter-spacing: -1.26px; margin-top: 16px; display: flex; align-items: baseline; }
h2 { font-size: 25px; line-height: 30px; font-weight: 700; letter-spacing: -1.26px; display: flex; align-items: baseline; }
h2 svg { width: 16px; height: 14px; margin: 2px 14.500px 0 2.500px; align-self: center; }
.info { font-size: 15px; line-height: 20px; font-weight: 700; color: #006ce0; letter-spacing: -.5px; }
h1 .info, h2 .info { margin-left: 15px; }
.desc { margin-top: 6px; color: #424650; white-space: nowrap; letter-spacing: -.175px; }
.card { background: #fff; border: 1px solid #c6c6cd; border-radius: 20px; }
.tags { margin-top: 21px; height: 456px; padding: 18.500px 25px 0; }
.row { display: grid; grid-template-columns: 270px 270px 269px 120px; column-gap: 25px; height: 128px; border-bottom: 1px solid #ebebf0; margin-top: 30.500px; align-items: start; }
.row.second { height: auto; border: 0; margin-top: 16px; }
label { display: flex; align-items: center; height: 20px; font-weight: 700; letter-spacing: -.66px; }
label i { width: 1px; height: 20px; background: #c6c6cd; margin: 0 14.500px 0 10px; }
.input { height: 40px; margin-top: 8px; border: 1px solid #8c8c94; border-radius: 10px; background: #fff; display: flex; align-items: center; padding: 0 14px 0 15px; letter-spacing: -.2px; }
.input em { color: #656871; letter-spacing: -.03px; }
.row > div:nth-child(2) .input { letter-spacing: -.12px; }
.mag { width: 18px; height: 18px; color: #656871; margin-right: 12px; }
.x { width: 21px; height: 21px; color: #006ce0; margin-left: auto; }
.tri { width: 14px; height: 12px; color: #006ce0; margin-left: auto; margin-right: 4px; }
.token { width: 133px; height: 40px; margin-top: 10px; border: 2px solid #006ce0; border-radius: 10px; background: #f0fbff; display: flex; align-items: center; padding: 0 9px 1px 14.500px; letter-spacing: -.44px; }
.btn { height: 39px; border: 2px solid #006ce0; border-radius: 20px; color: #006ce0; font-weight: 700; letter-spacing: -.8px; display: flex; align-items: center; justify-content: center; }
.row .btn { margin-top: 31px; }
.row.second .btn { margin-top: 30px; }
.btn.add { width: 158px; margin-top: 9px; letter-spacing: -.38px; }
.note { font-size: 15px; line-height: 20px; color: #656871; margin-top: 4px; letter-spacing: -.1px; }
.ami { margin-top: 25px; height: 300px; padding: 19px 25px 0; }
.ami h2 { letter-spacing: -1.03px; }
.amitext { margin-top: 15px; color: #424650; letter-spacing: -.21px; }
.amibox { margin: 26px 6px 0 4px; height: 100px; border: 2px solid #8c8c94; border-radius: 10px; }

.summary { width: 586px; height: 709px; margin: 15px 0 0 30px; flex: none; display: flex; flex-direction: column; }
.summary h2 { margin: 19px 0 0 25px; letter-spacing: -1.300px; }
.summary label { margin: 18px 0 0 25px; letter-spacing: -.68px; }
.num { margin: 8px 25px 0; flex: none; padding-left: 16px; }
hr { margin: 14px 25px 19.500px; border: 0; height: 1px; background: #ebebf0; flex: none; width: 534px; }
.details { height: 393px; margin: 0 25px; display: flex; justify-content: space-between; overflow: hidden; flex: none; }
.details dl { width: 515px; flex: none; padding-left: .5px; }
dt { color: #006ce0; font-weight: 700; letter-spacing: -.34px; }
dt:nth-of-type(2) { letter-spacing: -.39px; }
dd { margin-bottom: 25px; }
dd b { color: #006ce0; letter-spacing: -.55px; }
dt:nth-of-type(1) + dd { margin-bottom: 0; letter-spacing: -.19px; }
dd.small { font-size: 15px; line-height: 20px; color: #424650; letter-spacing: .25px; margin-bottom: 25px; }
.alert { border: 2px solid #006ce0; border-radius: 15px; background: #f0fbff; height: 140px; display: flex; padding: 20px 20px; letter-spacing: -.2px; }
.alert b { letter-spacing: -.6px; }
.alert .ic { width: 20px; height: 20px; color: #006ce0; margin-right: 10.500px; }
.alert p { padding-top: 2px; white-space: nowrap; }
.alert .x { color: #424650; }
.summary footer { border-top: 1px solid #c6c6cd; margin-top: 4px; padding: 25px 25px 0; color: #006ce0; font-weight: 700; letter-spacing: -.6px; }
.actions { display: flex; align-items: center; justify-content: space-between; padding-left: 27.500px; }
.launch { width: 188px; height: 39px; border-radius: 20px; background: #f90; color: #0f141a; display: flex; align-items: center; justify-content: center; }
.preview { display: flex; align-items: center; justify-content: flex-end; gap: 11px; margin: 17px 27px 0 0; }

.scroll { display: flex; flex-direction: column; align-items: center; color: #8b8b8b; }
.scroll svg { width: 14px; height: 11px; flex: none; }
.scroll .up { transform: rotate(180deg); }
.scroll i { width: 11px; border-radius: 6px; background: #8b8b8b; flex: none; }
.inner { width: 19px; background: #fafafb; padding-top: 6px; }
.inner i { margin: 6px 0 115px; height: 238px; }
.mid { width: 19px; margin-left: auto; padding-top: 5px; }
.mid i { height: 148px; margin: 7px 0 540px; }
.outer { width: 19px; background: #fcfcfc; padding-top: 5px; }
.outer i { height: 821px; margin: 7px 0 9px; }

.foot { height: 38px; flex: none; background: #161d26; border-top: 1px solid #424650; display: flex; align-items: center; padding: 0 20px; color: #ebebf0; font-size: 15px; font-weight: 500; letter-spacing: -.25px; }
.cs { margin: 0 31px 0 6px; letter-spacing: 0; }
.copy { margin-left: auto; color: #c6c6cd; font-weight: 400; letter-spacing: -.13px; }
.pr { margin-left: 37px; }
.te { margin: 0 30.500px; }
.ck { letter-spacing: -.31px; }

/* taskbar */
.taskbar { height: 60px; flex: none; border-top: 1px solid #464642; display: flex; align-items: center; padding-bottom: 1px; font-size: 15px; line-height: 20px; letter-spacing: -.3px; color: #fff;
  background: linear-gradient(90deg, #31261f 0, #2e241e 130px, #1f2c1a 270px, #1c2f1c 480px, #1d3326 600px, #1f2c28 690px, #30261f 840px, #2d281d 960px, #26291d 1240px, #33231a 1420px, #35241a 1740px, #27272a 1860px, #26282c); }
.weather { display: flex; align-items: center; position: relative; margin-left: 25px; width: 313px; }
.weather > svg { width: 30px; height: 34px; margin: -6px 9px 0 0; }
.badge { position: absolute; left: 14px; top: -3px; width: 19px; height: 19px; border-radius: 50%; background: #c42b1c; font: 400 13px/19px "Open Sans", sans-serif; text-align: center; }
.weather span { letter-spacing: -.7px; padding-bottom: 2px; }
.tsearch { width: 272px; height: 38px; border-radius: 19px; background: #f3f3f3; margin-left: 18px; display: flex; align-items: center; padding: 0 10px 0 14px; color: #5c5c5c; font-size: 17.5px; letter-spacing: -.32px; }
.tsearch span { margin: 0 auto 0 12px; }
.dock { display: grid; grid-template-columns: repeat(16, 55px); margin-left: 4.500px; height: 58px; }
.dock div { display: flex; align-items: center; justify-content: center; position: relative; }
.dock svg { width: 30px; height: 30px; }
.run::after { content: ""; position: absolute; bottom: 5px; width: 8px; height: 4px; border-radius: 2px; background: #9a9890; }
.active { background: rgba(255,255,255,.08); border: 1px solid rgba(255,255,255,.07); border-radius: 6px; margin: 4px 2px; }
.active::after { bottom: 0; width: 20px; background: #4cc2ff; }
.tray { display: flex; align-items: center; margin-left: auto; padding-right: 24px; }
.tray svg { margin-right: 10px; }
.tray .chev { margin-right: 25px; }
.lang { text-align: center; margin-right: 23px; }
.clock { text-align: right; margin-left: 10px; letter-spacing: -.13px; padding-bottom: 1px; }
```
